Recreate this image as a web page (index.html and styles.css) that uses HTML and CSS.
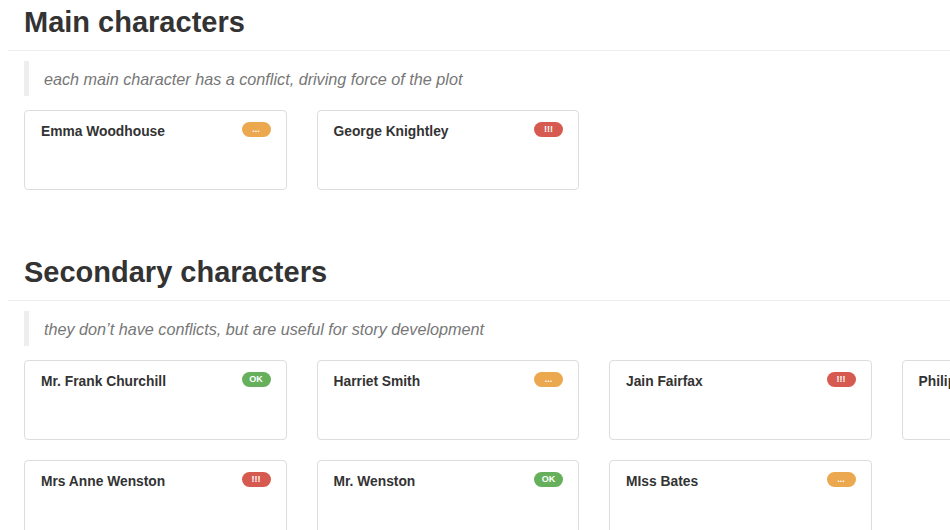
FILE: index.html
```html
<!DOCTYPE html>
<html lang="en">
<head>
<meta charset="utf-8">
<title>Characters</title>
<link rel="stylesheet" href="styles.css">
</head>
<body>
<div class="page">
  <section class="group">
    <h2 class="group-title">Main characters</h2>
    <div class="group-body">
      <blockquote class="note">each main character has a conflict, driving force of the plot</blockquote>
      <div class="cards">
        <div class="card"><span class="name">Emma Woodhouse</span><span class="badge badge-warn">...</span></div>
        <div class="card"><span class="name">George Knightley</span><span class="badge badge-danger">!!!</span></div>
      </div>
    </div>
  </section>
  <section class="group">
    <h2 class="group-title">Secondary characters</h2>
    <div class="group-body">
      <blockquote class="note">they don’t have conflicts, but are useful for story development</blockquote>
      <div class="cards">
        <div class="card"><span class="name">Mr. Frank Churchill</span><span class="badge badge-ok">OK</span></div>
        <div class="card"><span class="name">Harriet Smith</span><span class="badge badge-warn">...</span></div>
        <div class="card"><span class="name">Jain Fairfax</span><span class="badge badge-danger">!!!</span></div>
        <div class="card"><span class="name">Philip Elton</span><span class="badge badge-ok">OK</span></div>
        <div class="card"><span class="name">Mrs Anne Wenston</span><span class="badge badge-danger">!!!</span></div>
        <div class="card"><span class="name">Mr. Wenston</span><span class="badge badge-ok">OK</span></div>
        <div class="card"><span class="name">MIss Bates</span><span class="badge badge-warn">...</span></div>
      </div>
    </div>
  </section>
</div>
</body>
</html>
```
FILE: styles.css
```css
html, body {
  margin: 0;
  padding: 0;
  overflow: hidden;
  background: #fff;
}

body {
  font-family: "Liberation Sans", Arial, Helvetica, sans-serif;
  color: #333;
}

.page {
  width: 1200px;
  padding: 6px 0 0 8px;
}

.group {
  margin-bottom: 66px;
}

.group-title {
  margin: 0;
  padding: 0 0 11px 16px;
  font-size: 29px;
  line-height: 33px;
  font-weight: 700;
  color: #333;
  border-bottom: 1px solid #eee;
}

.group-body {
  padding-left: 16px;
}

.note {
  margin: 10px 0 14px 0;
  padding: 8px 15px 6px;
  border-left: 5px solid #eee;
  font-size: 16.2px;
  line-height: 21px;
  font-style: italic;
  color: #777;
}

.cards {
  display: grid;
  grid-template-columns: repeat(4, 262.5px);
  column-gap: 30px;
  row-gap: 20px;
}

.card {
  box-sizing: border-box;
  height: 80px;
  border: 1px solid #ddd;
  border-radius: 4px;
  padding: 11px 15px 0 16px;
  display: flex;
  justify-content: space-between;
  align-items: flex-start;
  background: #fff;
}

.name {
  font-size: 13.8px;
  line-height: 20px;
  font-weight: 700;
  color: #333;
}

.badge {
  min-width: 29px;
  height: 15px;
  box-sizing: border-box;
  padding: 0 5px;
  border-radius: 8px;
  font-size: 9px;
  line-height: 15px;
  font-weight: 700;
  color: #fff;
  text-align: center;
}

.badge-warn { background: #eca84e; }
.badge-danger { background: #d65a4f; }
.badge-ok { background: #66b05c; }
```
